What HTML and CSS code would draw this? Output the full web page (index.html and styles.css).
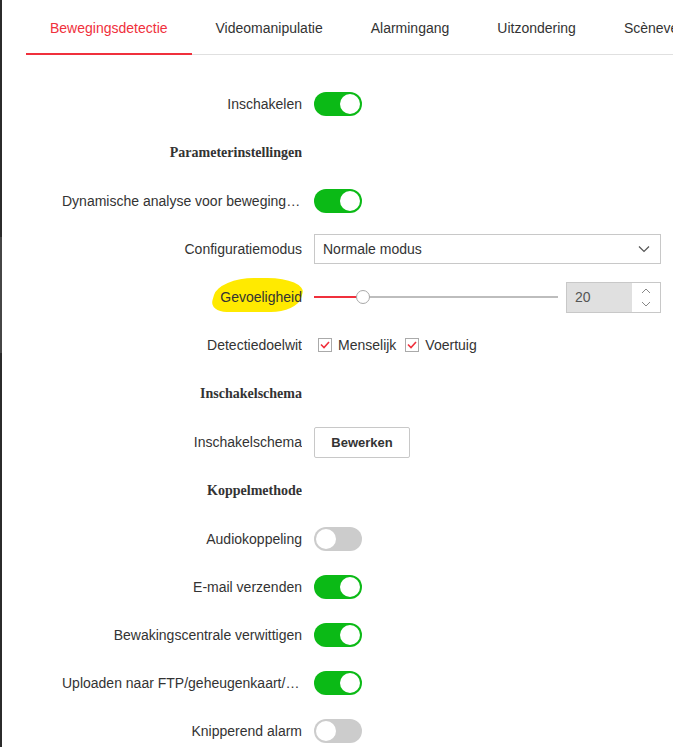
FILE: index.html
```html
<!DOCTYPE html>
<html lang="nl">
<head>
<meta charset="utf-8">
<title>Bewegingsdetectie</title>
<link rel="stylesheet" href="styles.css">
</head>
<body>
<div class="app">
  <div class="strip"><div class="thumb"></div></div>
  <main class="page">
    <nav class="tabs">
      <a class="tab active">Bewegingsdetectie</a>
      <a class="tab">Videomanipulatie</a>
      <a class="tab">Alarmingang</a>
      <a class="tab">Uitzondering</a>
      <a class="tab">Scèneverandering</a>
    </nav>
    <form class="form">
      <div class="row">
        <span class="label">Inschakelen</span>
        <span class="switch on"><span class="knob"></span></span>
      </div>
      <div class="row head"><span class="label">Parameterinstellingen</span></div>
      <div class="row">
        <span class="label">Dynamische analyse voor bewegingsdetectie</span>
        <span class="switch on"><span class="knob"></span></span>
      </div>
      <div class="row">
        <span class="label">Configuratiemodus</span>
        <div class="select">
          <span>Normale modus</span>
          <svg class="chev" width="12" height="8" viewBox="0 0 12 8"><polyline points="1,1.5 6,6.5 11,1.5" fill="none" stroke="#555" stroke-width="1.2"/></svg>
        </div>
      </div>
      <div class="row">
        <span class="label label-mark"><span class="mark">Gevoeligheid</span></span>
        <div class="slider-wrap">
          <div class="slider">
            <div class="track"><div class="fill"></div></div>
            <span class="thumb-knob"></span>
          </div>
          <div class="number">
            <span class="num-value">20</span>
            <span class="spin">
              <svg width="10" height="6" viewBox="0 0 10 6"><polyline points="1,5 5,1 9,5" fill="none" stroke="#888" stroke-width="1"/></svg>
              <svg width="10" height="6" viewBox="0 0 10 6"><polyline points="1,1 5,5 9,1" fill="none" stroke="#888" stroke-width="1"/></svg>
            </span>
          </div>
        </div>
      </div>
      <div class="row">
        <span class="label">Detectiedoelwit</span>
        <div class="checks">
          <span class="check"><svg width="14" height="14" viewBox="0 0 14 14"><polyline points="3,6.5 6,9.5 11,4" fill="none" stroke="#f0303c" stroke-width="1.6"/></svg></span>
          <span class="check-text">Menselijk</span>
          <span class="check second"><svg width="14" height="14" viewBox="0 0 14 14"><polyline points="3,6.5 6,9.5 11,4" fill="none" stroke="#f0303c" stroke-width="1.6"/></svg></span>
          <span class="check-text">Voertuig</span>
        </div>
      </div>
      <div class="row head"><span class="label">Inschakelschema</span></div>
      <div class="row">
        <span class="label">Inschakelschema</span>
        <button type="button" class="btn">Bewerken</button>
      </div>
      <div class="row head"><span class="label">Koppelmethode</span></div>
      <div class="row">
        <span class="label">Audiokoppeling</span>
        <span class="switch"><span class="knob"></span></span>
      </div>
      <div class="row">
        <span class="label">E-mail verzenden</span>
        <span class="switch on"><span class="knob"></span></span>
      </div>
      <div class="row">
        <span class="label">Bewakingscentrale verwittigen</span>
        <span class="switch on"><span class="knob"></span></span>
      </div>
      <div class="row">
        <span class="label">Uploaden naar FTP/geheugenkaart/NAS</span>
        <span class="switch on"><span class="knob"></span></span>
      </div>
      <div class="row">
        <span class="label">Knipperend alarm</span>
        <span class="switch"><span class="knob"></span></span>
      </div>
    </form>
  </main>
</div>
</body>
</html>
```
FILE: styles.css
```css
* { box-sizing: border-box; }
html, body { margin: 0; padding: 0; background: #fff; overflow: hidden; }
body {
  font-family: "Liberation Sans", Arial, sans-serif;
  font-size: 14px;
  color: #333;
}
.app { display: flex; height: 747px; }
.strip { width: 2px; flex: none; background: #2b2b2b; }
.strip .thumb { margin-top: 237px; height: 116px; background: #464646; }
.page { flex: 1; min-width: 0; padding-left: 24px; overflow: hidden; }

.tabs {
  display: flex;
  border-bottom: 1px solid #e0e0e0;
  height: 55px;
  white-space: nowrap;
}
.tab {
  flex: none;
  height: 55px;
  padding: 18px 24px 0;
  line-height: 20px;
  margin-bottom: -1px;
  border-bottom: 2px solid transparent;
  color: #333;
}
.tab.active { color: #f0303c; border-bottom-color: #f0303c; }

.form { margin-top: 25px; padding-left: 36px; }
.row { display: flex; align-items: center; height: 48px; }
.row.head { height: 49px; }
.label {
  width: 240px;
  flex: none;
  text-align: right;
  white-space: nowrap;
  overflow: hidden;
  text-overflow: ellipsis;
  margin-right: 12px;
  line-height: 20px;
}
.label.label-mark { overflow: visible; }
.head .label {
  font-family: "Liberation Serif", "Times New Roman", serif;
  font-weight: bold;
  color: #333;
}
.mark { position: relative; display: inline-block; isolation: isolate; }
.mark::before {
  content: "";
  position: absolute;
  left: -6px; right: 0; top: -9px; bottom: -5px;
  background: #ffea00;
  border-radius: 40% 45% 30% 20% / 50% 45% 40% 35%;
  transform: skewX(-16deg);
  z-index: -1;
}

.switch {
  width: 48px; height: 24px; border-radius: 12px;
  background: #cccccc;
  display: flex; align-items: center;
  padding: 2px;
}
.switch.on { background: #0bba16; justify-content: flex-end; }
.knob { width: 20px; height: 20px; border-radius: 50%; background: #fff; }

.select {
  width: 347px; height: 30px;
  border: 1px solid #c8c8c8;
  display: flex; align-items: center; justify-content: space-between;
  padding: 0 10px 0 8px;
}
.chev { display: block; }

.slider-wrap { display: flex; align-items: center; width: 347px; }
.slider { position: relative; flex: 1; height: 16px; display: flex; align-items: center; }
.track { width: 100%; height: 2px; background: #bdbdbd; }
.fill { width: 49px; height: 2px; background: #f0303c; }
.thumb-knob {
  position: absolute; left: 42px; top: 1px;
  width: 14px; height: 14px; border-radius: 50%;
  background: #fff; border: 1px solid #a8a8a8;
}
.number {
  width: 95px; height: 31px; margin-left: 8px;
  border: 1px solid #c8c8c8; display: flex;
}
.num-value { flex: 1; background: #e0e0e0; padding-left: 8px; line-height: 29px; color: #555; }
.spin { width: 28px; display: flex; flex-direction: column; align-items: center; justify-content: center; gap: 7px; }
.spin svg { display: block; }

.checks { display: flex; align-items: center; padding-left: 4px; }
.check {
  width: 14px; height: 14px; border: 1px solid #aaa;
  display: flex; align-items: center; justify-content: center;
}
.check svg { display: block; margin: -1px; }
.check-text { margin-left: 6px; }
.check.second { margin-left: 9px; }

.btn {
  width: 96px; height: 31px;
  background: #fff; border: 1px solid #c8c8c8; border-radius: 2px;
  font-family: "Liberation Sans", Arial, sans-serif;
  font-size: 13px; font-weight: bold; color: #333;
  padding: 0;
}
```
